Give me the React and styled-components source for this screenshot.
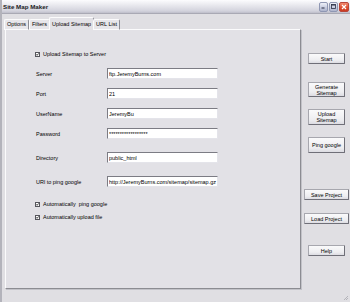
import React from 'react';
import styled, { createGlobalStyle } from 'styled-components';

const GlobalStyle = createGlobalStyle`
    html, body {
        margin: 0;
        padding: 0;
        background: #e0dfe3;
    }
    body {
        font-family: 'Liberation Sans', Arial, sans-serif;
    }
`;

const Window = styled.div`
    position: relative;
    width: 348px;
    height: 302px;
    display: flex;
    flex-direction: column;
    background: #e0dfe3;
    border-left: 2px solid #b3b3bb;
    overflow: hidden;
    font-size: 5.5px;
    line-height: 7px;
    color: #000;
`;

const TitleBar = styled.div`
    flex: none;
    height: 13px;
    display: flex;
    align-items: center;
    justify-content: space-between;
    padding: 0 1px;
    background: linear-gradient(#fcfcfe, #e6e6ec 45%, #d2d2dc 85%, #bdbdc9);
    border-bottom: 1px solid #a9a9b4;
`;

const Title = styled.span`
    font-weight: bold;
    font-size: 6.2px;
    color: #1b1b24;
`;

const Controls = styled.div`
    display: flex;
    gap: 1px;
    align-items: center;
`;

const ControlButton = styled.div`
    width: ${p => (p.$close ? 10 : 9)}px;
    height: 10px;
    border-radius: 2px;
    border: 1px solid ${p => (p.$close ? '#b8463a' : '#8f97b3')};
    box-sizing: border-box;
    background: ${p =>
        p.$close
            ? 'linear-gradient(#f08a70, #dd4a2c 60%, #c93a22)'
            : 'linear-gradient(#eef0f8, #c4c9dd 60%, #aeb4cc)'};
    display: flex;
    align-items: center;
    justify-content: center;
`;

const Main = styled.div`
    display: flex;
    align-items: flex-start;
`;

const LeftColumn = styled.div`
    display: flex;
    flex-direction: column;
    padding: 3px 0 0 2px;
`;

const TabStrip = styled.div`
    flex: none;
    height: 13px;
    display: flex;
    align-items: flex-end;
    position: relative;
    z-index: 1;
    margin-bottom: -1px;
`;

const Tab = styled.div`
    height: ${p => (p.$active ? 13 : 11)}px;
    box-sizing: border-box;
    padding: 0 2px;
    display: flex;
    align-items: center;
    background: ${p => (p.$active ? '#e2e1e6' : '#e7e6ea')};
    border: 1px solid #fbfbfc;
    border-right-color: #8d8d94;
    border-bottom: ${p => (p.$active ? 'none' : '1px solid #fbfbfc')};
    border-radius: 2px 2px 0 0;
    margin: 0 ${p => (p.$active ? -1 : 0)}px;
`;

const Panel = styled.div`
    flex: none;
    width: 296px;
    height: 260px;
    box-sizing: border-box;
    margin-left: 1px;
    background: #e2e1e6;
    border: 1px solid #fbfbfc;
    border-right-color: #8c8c92;
    border-bottom-color: #8c8c92;
    box-shadow: 1px 1px 0 #c2c2c8;
    padding: 21px 0 0 29px;
    display: flex;
    flex-direction: column;
`;

const CheckRow = styled.label`
    flex: none;
    display: flex;
    align-items: center;
    gap: 3px;
    height: 7px;
    margin-top: ${p => p.$top || 0}px;
`;

const Box = styled.span`
    width: 5px;
    height: 5px;
    box-sizing: border-box;
    border: 1px solid #55555c;
    background: #fff;
    display: flex;
    align-items: center;
    justify-content: center;
`;

const FieldRow = styled.div`
    flex: none;
    height: 11px;
    display: grid;
    grid-template-columns: 71px 111px;
    align-items: center;
    margin-top: ${p => p.$top}px;
    padding-left: 1px;
`;

const FieldLabel = styled.span`
    padding-top: 1px;
`;

const TextInput = styled.input`
    height: 11px;
    width: 111px;
    box-sizing: border-box;
    margin: 0;
    padding: 1px 0 0 1px;
    font-family: 'Liberation Sans', Arial, sans-serif;
    font-size: 5.5px;
    color: #000;
    background: #fff;
    border: 1px solid #e4e4ea;
    border-top-color: #7c7c84;
    border-left-color: #7c7c84;
    outline: none;
`;

const RightColumn = styled.div`
    width: 47px;
    margin-left: 2px;
    padding-top: 39px;
    display: flex;
    flex-direction: column;
    align-items: center;
`;

const SideButton = styled.div`
    flex: none;
    width: ${p => (p.$wide ? 45 : 37)}px;
    height: ${p => p.$h || 11}px;
    margin-top: ${p => p.$top || 0}px;
    box-sizing: border-box;
    display: flex;
    align-items: center;
    justify-content: center;
    text-align: center;
    line-height: 6px;
    background: linear-gradient(#fafafb, #ededf0 70%, #dcdce2);
    border: 1px solid #a7a7ae;
    border-right-color: #6f6f78;
    border-bottom-color: #6f6f78;
    border-radius: 1px;
`;

const Grip = styled.svg`
    position: absolute;
    right: 1px;
    bottom: 1px;
`;

const fields = [
    { label: 'Server', value: 'ftp.JeremyBurns.com', top: 10 },
    { label: 'Port', value: '21', top: 9 },
    { label: 'UserName', value: 'JeremyBu', top: 9 },
    { label: 'Password', value: '******************', top: 9 },
    { label: 'Directory', value: 'public_html', top: 13 },
    { label: 'URl to ping google', value: 'http://JeremyBurns.com/sitemap/sitemap.gz', top: 13 },
];

function Check() {
    return (
        <Box>
            <svg width="3" height="3" viewBox="0 0 3 3">
                <path d="M0.3 1.4 L1.1 2.3 L2.7 0.4" stroke="#222" strokeWidth="0.9" fill="none" />
            </svg>
        </Box>
    );
}

export default function App() {
    return (
        <Window>
            <GlobalStyle />
            <TitleBar>
                <Title>Site Map Maker</Title>
                <Controls>
                    <ControlButton>
                        <svg width="5" height="5" viewBox="0 0 5 5">
                            <rect x="0.5" y="3.5" width="3" height="1" fill="#2a2f45" />
                        </svg>
                    </ControlButton>
                    <ControlButton>
                        <svg width="5" height="5" viewBox="0 0 5 5">
                            <rect x="0.5" y="0.5" width="4" height="4" fill="none" stroke="#2a2f45" strokeWidth="0.8" />
                            <rect x="0.5" y="0.5" width="4" height="1" fill="#2a2f45" />
                        </svg>
                    </ControlButton>
                    <ControlButton $close>
                        <svg width="6" height="6" viewBox="0 0 6 6">
                            <path d="M1 1 L5 5 M5 1 L1 5" stroke="#fff" strokeWidth="1.2" />
                        </svg>
                    </ControlButton>
                </Controls>
            </TitleBar>
            <Main>
                <LeftColumn>
                    <TabStrip>
                        <Tab>Options</Tab>
                        <Tab>Filters</Tab>
                        <Tab $active>Upload Sitemap</Tab>
                        <Tab>URL List</Tab>
                    </TabStrip>
                    <Panel>
                        <CheckRow>
                            <Check />
                            Upload Sitemap to Server
                        </CheckRow>
                        {fields.map(f => (
                            <FieldRow key={f.label} $top={f.top}>
                                <FieldLabel>{f.label}</FieldLabel>
                                <TextInput readOnly defaultValue={f.value} />
                            </FieldRow>
                        ))}
                        <CheckRow $top={14}>
                            <Check />
                            Automatically&nbsp; ping google
                        </CheckRow>
                        <CheckRow $top={6}>
                            <Check />
                            Automatically upload file
                        </CheckRow>
                    </Panel>
                </LeftColumn>
                <RightColumn>
                    <SideButton>Start</SideButton>
                    <SideButton $h={15} $top={18}>Generate<br />Sitemap</SideButton>
                    <SideButton $h={16} $top={12}>Upload<br />Sitemap</SideButton>
                    <SideButton $h={16} $top={12}>Ping google</SideButton>
                    <SideButton $wide $top={36}>Save Project</SideButton>
                    <SideButton $wide $top={13}>Load Project</SideButton>
                    <SideButton $top={21}>Help</SideButton>
                </RightColumn>
            </Main>
            <Grip width="6" height="6" viewBox="0 0 6 6">
                <path d="M5 1 L1 5 M5 3 L3 5" stroke="#a8a8b0" strokeWidth="0.8" />
            </Grip>
        </Window>
    );
}
